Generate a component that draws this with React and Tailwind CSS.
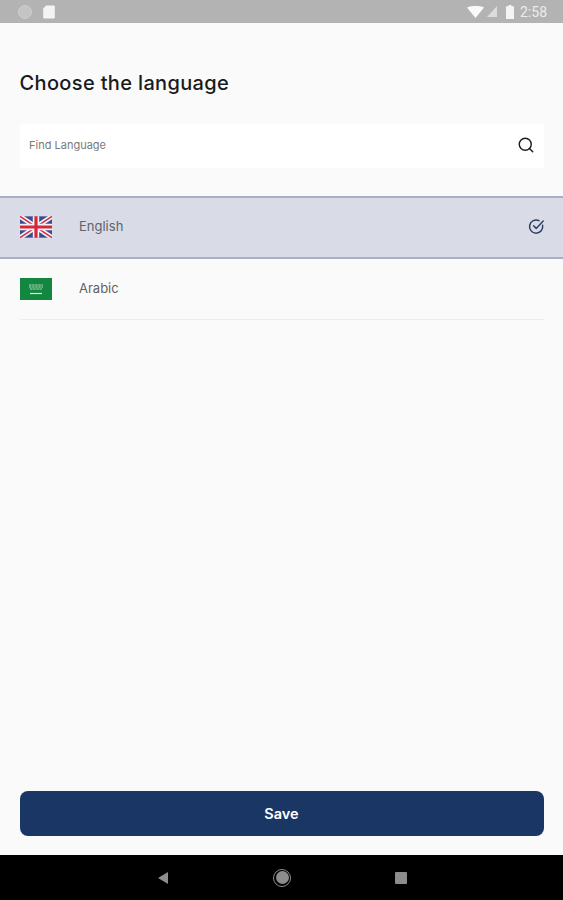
import { Search } from 'lucide-react'

const font = { fontFamily: 'Inter, sans-serif' }

function StatusBar() {
  return (
    <div className="flex h-[23px] items-center justify-between bg-[#b3b3b3] pl-[18px] pr-[16px]">
      <div className="flex items-center gap-[11px]">
        <div className="h-[14px] w-[14px] rounded-full border border-[#cfcfcf] bg-[#c4c4c4]" />
        <svg width="12" height="14" viewBox="0 0 12 14">
          <path d="M3 0.5h8a.8.8 0 0 1 .8.8v11.4a.8.8 0 0 1-.8.8H1a.8.8 0 0 1-.8-.8V3.5z" fill="#f4f4f4" />
        </svg>
      </div>
      <div className="flex items-center">
        <svg width="17" height="12" viewBox="0 0 17 12" className="mr-[3px]">
          <path d="M0 1.5C2.5 0.4 5.5 0 8.5 0s6 .4 8.5 1.5L8.5 12z" fill="#fafafa" />
        </svg>
        <svg width="10" height="11" viewBox="0 0 10 11" className="mr-[9px]">
          <path d="M10 0v11H0z" fill="#dcdcdc" />
        </svg>
        <svg width="8" height="14" viewBox="0 0 8 14" className="mr-[6px]">
          <path d="M2.5 0h3v1.2H8V14H0V1.2h2.5z" fill="#f4f4f4" />
        </svg>
        <span className="text-[14px] leading-none text-[#ececec]" style={{ fontFamily: 'Roboto, sans-serif' }}>2:58</span>
      </div>
    </div>
  )
}

function UkFlag() {
  return (
    <svg width="32" height="22" viewBox="0 0 60 40" className="shrink-0">
      <rect width="60" height="40" fill="#3a4c8f" />
      <path d="M0 0L60 40M60 0L0 40" stroke="#f3f3f6" strokeWidth="9" />
      <path d="M0 0L60 40M60 0L0 40" stroke="#d5324a" strokeWidth="3" />
      <path d="M30 0V40M0 20H60" stroke="#f3f3f6" strokeWidth="12" />
      <path d="M30 0V40M0 20H60" stroke="#d5283c" strokeWidth="6" />
    </svg>
  )
}

function SaudiFlag() {
  return (
    <svg width="32" height="22" viewBox="0 0 32 22" className="shrink-0">
      <rect width="32" height="22" fill="#13863f" />
      <path d="M9 7h14M9 9h14M10 11h12" stroke="#b5d8c0" strokeWidth="1.2" strokeDasharray="2.5 .6" />
      <path d="M10 15.5h12" stroke="#dfeee5" strokeWidth="1.2" />
    </svg>
  )
}

function CheckIcon() {
  return (
    <svg width="17" height="17" viewBox="0 0 17 17" fill="none" stroke="#2d3f62" strokeWidth="1.5" strokeLinecap="round" strokeLinejoin="round">
      <path d="M14.6 7.2A6.6 6.6 0 1 1 11 2.6" />
      <path d="M5.6 7.8l2.6 2.6 7-7.4" />
    </svg>
  )
}

export default function App() {
  return (
    <div className="flex h-[900px] flex-col bg-[#fafafa]" style={font}>
      <StatusBar />
      <div className="flex flex-1 flex-col">
        <h1 className="mt-[47px] px-[19.5px] text-[20px] leading-[26px] font-medium tracking-[0.35px] text-[#1a1a1a]">Choose the language</h1>
        <div className="mx-[19.5px] mt-[28px] flex h-[44px] items-center justify-between bg-white pb-[2px] pl-[9.5px] pr-[9px]">
          <span className="text-[11px] text-[#7a7a7a]">Find Language</span>
          <Search size={18} strokeWidth={1.9} className="text-[#1c1c1c]" />
        </div>

        <div className="mt-[28px] flex h-[63px] items-center border-y-2 border-[#a9aec6] bg-[#d9dce6] pb-[2px] pl-[19.5px] pr-[18px]">
          <UkFlag />
          <span className="ml-[27.5px] flex-1 text-[13px] text-[#5f636e]">English</span>
          <CheckIcon />
        </div>

        <div className="mx-[19.5px] flex h-[61px] items-center border-b border-[#ececec]">
          <SaudiFlag />
          <span className="ml-[27.5px] text-[13px] text-[#626262]">Arabic</span>
        </div>

        <div className="mt-auto px-[19.5px] pb-[19px]">
          <button className="h-[45px] w-full rounded-[8px] bg-[#1a3665] text-[14.5px] font-semibold text-white">Save</button>
        </div>
      </div>
      <div className="flex h-[45px] items-center justify-between bg-black pl-[157px] pr-[156px]">
        <svg width="12" height="14" viewBox="0 0 12 14"><path d="M11 1v12L1 7z" fill="#8c8c8c" /></svg>
        <div className="flex h-[18px] w-[18px] items-center justify-center rounded-full border border-[#8c8c8c]">
          <div className="h-[13px] w-[13px] rounded-full bg-[#8c8c8c]" />
        </div>
        <div className="h-[12px] w-[12px] rounded-[1px] bg-[#8c8c8c]" />
      </div>
    </div>
  )
}
